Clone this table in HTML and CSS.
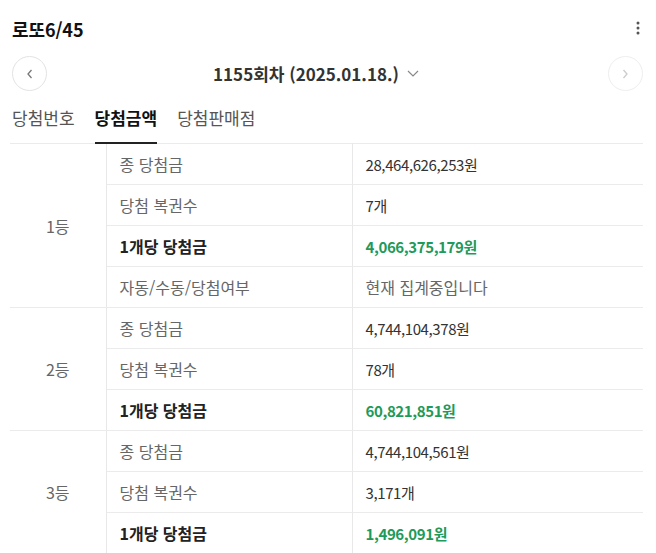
FILE: index.html
```html
<!DOCTYPE html>
<html lang="ko">
<head>
  <meta charset="UTF-8">
  <meta name="viewport" content="width=device-width, initial-scale=1.0">
  <title>로또6/45</title>
  <link rel="stylesheet" href="styles.css">
</head>
<body>
  <div class="lotto">
      <div class="top">
          <h1>로또6/45</h1>
          <button class="more" aria-label="더보기">
              <svg width="4" height="14" viewBox="0 0 4 14"><circle cx="2" cy="2" r="1.5"/><circle cx="2" cy="7" r="1.5"/><circle cx="2" cy="12" r="1.5"/></svg>
          </button>
      </div>

      <div class="round-nav">
          <button class="circle-btn">
              <svg width="10" height="12" viewBox="0 0 10 12"><path d="M6.5 2 L3 6 L6.5 10" fill="none" stroke="#777" stroke-width="1.3"/></svg>
          </button>
          <div class="round-title">
              <span>1155회차 (2025.01.18.)</span>
              <svg width="14" height="10" viewBox="0 0 14 10"><path d="M2 3 L7 8 L12 3" fill="none" stroke="#888" stroke-width="1.2"/></svg>
          </div>
          <button class="circle-btn disabled">
              <svg width="10" height="12" viewBox="0 0 10 12"><path d="M3.5 2 L7 6 L3.5 10" fill="none" stroke="#ccc" stroke-width="1.3"/></svg>
          </button>
      </div>

      <div class="tabs">
          <a href="#">당첨번호</a>
          <a href="#" class="active">당첨금액</a>
          <a href="#">당첨판매점</a>
      </div>

      <table class="prize">
          <tr>
              <td class="rank" rowspan="4">1등</td>
              <td class="label">종 당첨금</td>
              <td class="value">28,464,626,253원</td>
          </tr>
          <tr>
              <td class="label">당첨 복권수</td>
              <td class="value">7개</td>
          </tr>
          <tr>
              <td class="label strong">1개당 당첨금</td>
              <td class="value money">4,066,375,179원</td>
          </tr>
          <tr>
              <td class="label">자동/수동/당첨여부</td>
              <td class="value muted">현재 집계중입니다</td>
          </tr>

          <tr>
              <td class="rank" rowspan="3">2등</td>
              <td class="label">종 당첨금</td>
              <td class="value">4,744,104,378원</td>
          </tr>
          <tr>
              <td class="label">당첨 복권수</td>
              <td class="value">78개</td>
          </tr>
          <tr>
              <td class="label strong">1개당 당첨금</td>
              <td class="value money">60,821,851원</td>
          </tr>

          <tr>
              <td class="rank" rowspan="3">3등</td>
              <td class="label">종 당첨금</td>
              <td class="value">4,744,104,561원</td>
          </tr>
          <tr>
              <td class="label">당첨 복권수</td>
              <td class="value">3,171개</td>
          </tr>
          <tr>
              <td class="label strong">1개당 당첨금</td>
              <td class="value money">1,496,091원</td>
          </tr>
      </table>
  </div>
</body>
</html>
```

FILE: styles.css
```css
body {
    margin: 0;
    background: #fff;
    font-family: "Noto Sans CJK KR", "Noto Sans", sans-serif;
    color: #333;
}
.lotto {
    width: 656px;
}
.top {
    display: flex;
    align-items: center;
    justify-content: space-between;
    padding: 17px 10px 0 12px;
    height: 24px;
}
.top h1 {
    margin: 0;
    font-size: 18px;
    font-weight: 700;
    color: #111;
    letter-spacing: -0.1px;
}
.more {
    border: none;
    background: none;
    padding: 0;
    width: 16px;
    height: 20px;
    fill: #555;
}
.round-nav {
    display: flex;
    align-items: center;
    justify-content: space-between;
    padding: 0 13px 0 12px;
    margin-top: 15px;
}
.circle-btn {
    width: 35px;
    height: 35px;
    border-radius: 50%;
    border: 1px solid #e3e3e3;
    background: #fff;
    display: flex;
    align-items: center;
    justify-content: center;
    padding: 0;
}
.circle-btn.disabled {
    border-color: #eeeeee;
}
.round-title {
    display: flex;
    align-items: center;
    gap: 7px;
    font-size: 17px;
    font-weight: 600;
    color: #333;
    margin-right: 22px;
}
.round-title svg {
    margin-top: -2px;
}
.tabs {
    display: flex;
    gap: 20px;
    padding: 0 0 0 12px;
    margin-top: 15px;
    height: 38px;
    box-sizing: border-box;
}
.tabs a {
    font-size: 17px;
    line-height: 24px;
    color: #555;
    text-decoration: none;
    border-bottom: 2px solid transparent;
    box-sizing: border-box;
    height: 38px;
}
.tabs a.active {
    color: #111;
    font-weight: 700;
    border-bottom-color: #222;
}
.prize {
    border-collapse: collapse;
    margin: -1px 0 0 10px;
    width: 633px;
    font-size: 16px;
}
.prize td {
    height: 40px;
    padding: 0 13px;
    border-top: 1px solid #ebebeb;
    border-bottom: 1px solid #ebebeb;
}
.prize td.rank {
    width: 96px;
    padding: 0;
    text-align: center;
    color: #666;
    border-right: 1px solid #e8e8e8;
    box-sizing: border-box;
}
.prize td.label {
    width: 246px;
    color: #666;
    border-right: 1px solid #e8e8e8;
    box-sizing: border-box;
}
.prize td.label.strong {
    color: #222;
    font-weight: 700;
}
.prize td.value {
    color: #333;
    font-size: 15px;
    letter-spacing: -0.4px;
}
.prize td.value.muted {
    color: #666;
    font-size: 16px;
    letter-spacing: 0;
}
.prize td.value.money {
    color: #1e9a5a;
    font-weight: 700;
}
```
